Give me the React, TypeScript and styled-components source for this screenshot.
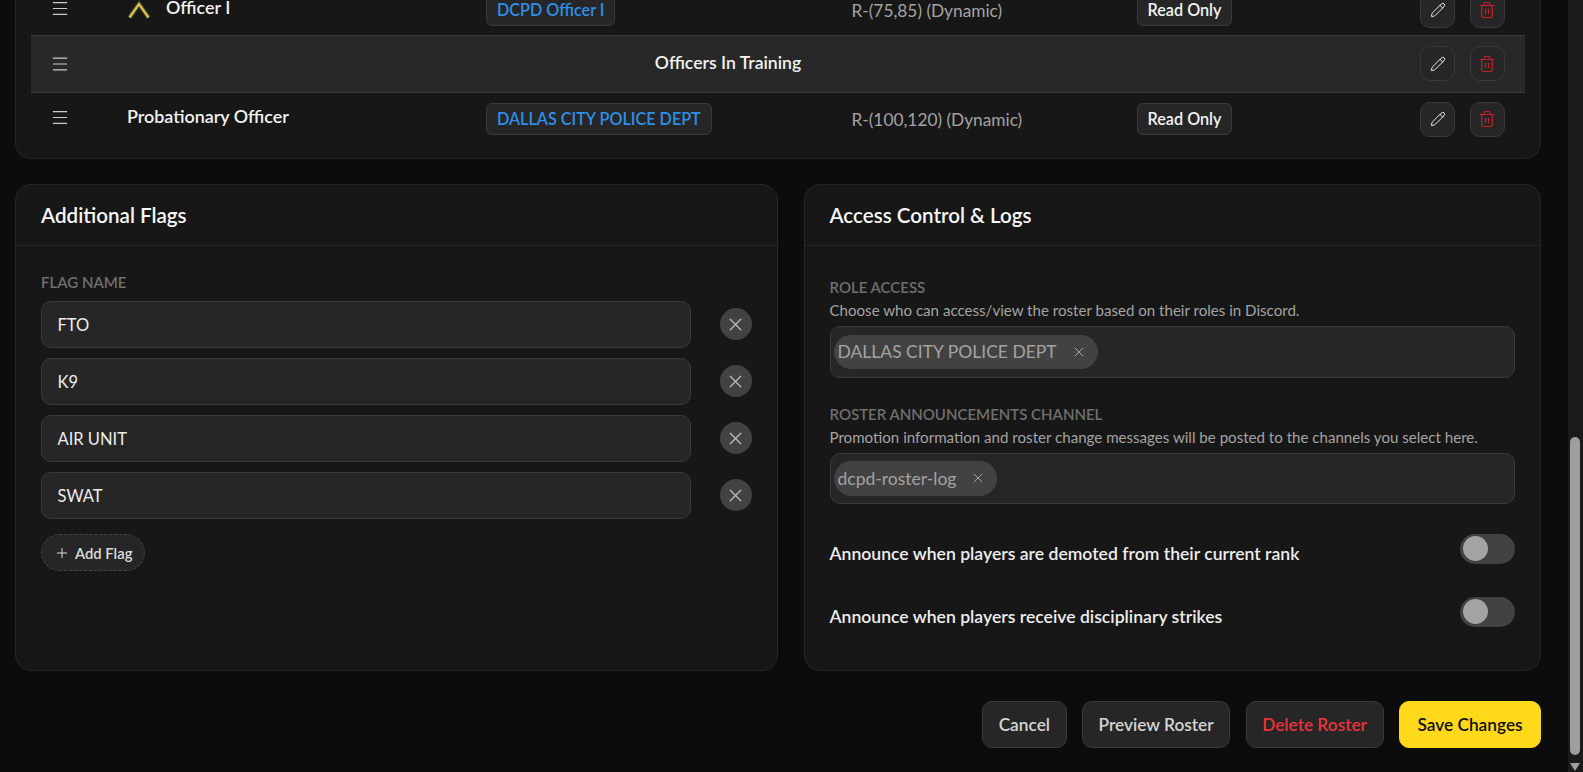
import React from "react";
import styled, { createGlobalStyle } from "styled-components";
import { Menu, Pencil, Plus, Trash2, X } from "lucide-react";

const GlobalStyle = createGlobalStyle`
  html, body {
    margin: 0;
    height: 100%;
    background: #0c0c0c;
    font-family: "Lato", "Noto Sans", sans-serif;
    overflow: hidden;
  }
  * { box-sizing: border-box; }
`;

const Page = styled.div`
  display: flex;
  height: 100vh;
`;

const Main = styled.div`
  flex: 1;
  min-width: 0;
  height: 100%;
  overflow: hidden;
  display: flex;
  flex-direction: column;
  justify-content: flex-end;
  padding: 0 26.5px 24.5px 15px;
`;

const ScrollTrack = styled.div`
  width: 15.5px;
  flex-shrink: 0;
  background: #1a1a1a;
  display: flex;
  flex-direction: column;
  align-items: center;
  padding-top: 436.5px;
`;

const ScrollThumb = styled.div`
  width: 10px;
  height: 318px;
  border-radius: 5px;
  background: #9e9e9e;
`;

const ScrollArrow = styled.div`
  margin-top: 8px;
  width: 0;
  height: 0;
  border-left: 5.5px solid transparent;
  border-right: 5.5px solid transparent;
  border-top: 8px solid #9e9e9e;
`;

const Card = styled.section`
  background: #171717;
  border: 1px solid #262626;
  border-radius: 16px;
`;

const TableCard = styled(Card)`
  flex-shrink: 0;
  padding: 0 15px 14px;
  border-top: 0;
  border-radius: 0 0 16px 16px;
`;

const Row = styled.div<{ $group?: boolean }>`
  display: grid;
  grid-template-columns: 96px 359px 365.5px 285px 192.5px 1fr;
  align-items: center;
  padding: ${(p) => (p.$group ? "10.5px 0" : "9px 0 7px")};
  background: ${(p) => (p.$group ? "#282828" : "transparent")};
  border-top: ${(p) => (p.$group ? "1px solid #3a3a3a" : "0")};
  border-bottom: ${(p) => (p.$group ? "1px solid #3a3a3a" : "0")};
`;

const Handle = styled.div<{ $group?: boolean }>`
  padding-left: 18.5px;
  display: flex;
  color: #c9c9c9;
  transform: translateY(${(p) => (p.$group ? "0" : "-1.5px")});
`;

const RankName = styled.div`
  display: flex;
  align-items: center;
  gap: 15px;
  color: #f2f2f2;
  font-size: 17.9px;
  font-weight: 600;
  transform: translateY(-3px);
`;

const ChevronSvg = styled.svg`
  margin-top: 6px;
  flex-shrink: 0;
`;

const GroupLabel = styled.div`
  grid-column: 2 / 6;
  text-align: center;
  color: #f2f2f2;
  font-size: 17.6px;
  font-weight: 600;
  transform: translateY(-1px);
`;

const Pill = styled.span<{ $blue?: boolean }>`
  display: inline-flex;
  align-items: center;
  height: 32px;
  padding: 0 10px 1px;
  border: 1px solid #3a3a3a;
  border-radius: 6px;
  background: #262626;
  color: ${(p) => (p.$blue ? "#2f8fe6" : "#f2f2f2")};
  font-size: 16.2px;
  font-weight: 600;
  white-space: nowrap;
`;

const RangeText = styled.div`
  color: #a3a3a3;
  font-size: 17.3px;
`;

const Actions = styled.div`
  grid-column: 6;
  display: flex;
  justify-content: flex-end;
  gap: 14.5px;
  padding-right: 20.5px;
`;

const IconButton = styled.button<{ $danger?: boolean }>`
  width: 35px;
  height: 35px;
  padding: 0;
  display: grid;
  place-items: center;
  background: #262626;
  border: 1px solid #3a3a3a;
  border-radius: 10px;
  color: ${(p) => (p.$danger ? "#c42126" : "#ededed")};
`;

const Columns = styled.div`
  flex-shrink: 0;
  margin-top: 25px;
  display: grid;
  grid-template-columns: 762.5px 1fr;
  gap: 26px;
`;

const PanelCard = styled(Card)`
  height: 487px;
`;

const PanelHeader = styled.header`
  height: 61px;
  padding: 0 25px;
  display: flex;
  align-items: center;
  border-bottom: 1px solid #262626;
  color: #f5f5f5;
  font-size: 20.6px;
  font-weight: 600;
`;

const PanelBody = styled.div<{ $top: number }>`
  padding: ${(p) => p.$top}px 25px 0;
`;

const FieldLabel = styled.div`
  color: #6f6f6f;
  font-size: 15px;
  font-weight: 600;
  line-height: 18px;
`;

const FlagList = styled.div`
  margin-top: 10px;
  display: flex;
  flex-direction: column;
  gap: 10px;
`;

const FlagRow = styled.div`
  display: flex;
  align-items: center;
  gap: 28.5px;
`;

const FlagInput = styled.div`
  flex: 1;
  height: 47px;
  padding: 2px 15.5px 0;
  display: flex;
  align-items: center;
  background: #262626;
  border: 1px solid #3a3a3a;
  border-radius: 10px;
  color: #ededed;
  font-size: 16.5px;
`;

const RemoveButton = styled.button`
  width: 32px;
  height: 32px;
  padding: 0;
  flex-shrink: 0;
  display: grid;
  place-items: center;
  border: 0;
  border-radius: 50%;
  background: #424242;
  color: #bdbdbd;
`;

const AddButton = styled.button`
  margin-top: 15.5px;
  height: 37px;
  padding: 1px 12px 0 12px;
  display: flex;
  align-items: center;
  gap: 5px;
  background: #262626;
  border: 1px dashed #444;
  border-radius: 18.5px;
  color: #dcdcdc;
  font-family: inherit;
  font-size: 14.8px;
  font-weight: 600;
`;

const FieldGroup = styled.div<{ $gap?: number }>`
  margin-top: ${(p) => p.$gap ?? 0}px;
`;

const FieldHint = styled.div`
  margin-top: 5px;
  color: #a3a3a3;
  font-size: 15.1px;
  line-height: 18px;
`;

const TagBox = styled.div<{ $tall?: boolean }>`
  margin-top: 7.5px;
  height: ${(p) => (p.$tall ? "51.5px" : "50.5px")};
  padding: 0 3px;
  display: flex;
  align-items: center;
  background: #262626;
  border: 1px solid #3a3a3a;
  border-radius: 10px;
`;

const Chip = styled.span`
  height: 34.5px;
  padding: 0 11px 0 4px;
  display: inline-flex;
  align-items: center;
  gap: 14px;
  background: #424242;
  border-radius: 17.5px;
  color: #a3a3a3;
  font-size: 17.5px;
`;

const ToggleRow = styled.div<{ $gap: number }>`
  margin-top: ${(p) => p.$gap}px;
  display: flex;
  align-items: center;
  justify-content: space-between;
`;

const ToggleLabel = styled.span`
  padding-top: 9px;
  color: #ededed;
  font-size: 17.6px;
  font-weight: 600;
`;

const Toggle = styled.div`
  width: 55px;
  height: 30px;
  padding: 2.5px 3px;
  border-radius: 15px;
  background: #424242;
`;

const Knob = styled.div`
  width: 25px;
  height: 25px;
  border-radius: 50%;
  background: #a3a3a3;
`;

const Footer = styled.div`
  flex-shrink: 0;
  margin-top: 30px;
  display: flex;
  justify-content: flex-end;
  gap: 15.5px;
`;

const FooterButton = styled.button<{ $tone?: "danger" | "primary" }>`
  height: 47px;
  min-width: ${(p) => (p.$tone === "primary" ? "142px" : "0")};
  padding: 0 15.5px;
  border: 1px solid ${(p) => (p.$tone === "primary" ? "#ffd91a" : "#3a3a3a")};
  border-radius: 10px;
  background: ${(p) => (p.$tone === "primary" ? "#ffd91a" : "#262626")};
  color: ${(p) =>
    p.$tone === "primary" ? "#111" : p.$tone === "danger" ? "#e5343a" : "#d4d4d4"};
  font-family: inherit;
  font-size: 17.3px;
  font-weight: 600;
`;

const ChevronIcon = () => (
  <ChevronSvg width="24" height="20" viewBox="0 0 24 20" fill="none">
    <path d="M2.5 17.5 L12 4 L21.5 17.5" stroke="#24402c" strokeWidth="5" />
    <path d="M2.5 17.5 L12 4 L21.5 17.5" stroke="#e9b84f" strokeWidth="2.4" />
  </ChevronSvg>
);

const RowActions = () => (
  <Actions>
    <IconButton>
      <Pencil size={16} strokeWidth={1.5} />
    </IconButton>
    <IconButton $danger>
      <Trash2 size={18} strokeWidth={1.6} />
    </IconButton>
  </Actions>
);

const flags = ["FTO", "K9", "AIR UNIT", "SWAT"];

export default function App() {
  return (
    <Page>
      <GlobalStyle />
      <Main>
        <TableCard>
          <Row>
            <Handle><Menu size={20} strokeWidth={1.4} /></Handle>
            <RankName><ChevronIcon />Officer I</RankName>
            <div><Pill $blue>DCPD Officer I</Pill></div>
            <RangeText>R-(75,85) (Dynamic)</RangeText>
            <div><Pill>Read Only</Pill></div>
            <RowActions />
          </Row>
          <Row $group>
            <Handle $group><Menu size={20} strokeWidth={1.4} /></Handle>
            <GroupLabel>Officers In Training</GroupLabel>
            <RowActions />
          </Row>
          <Row>
            <Handle><Menu size={20} strokeWidth={1.4} /></Handle>
            <RankName>Probationary Officer</RankName>
            <div><Pill $blue>DALLAS CITY POLICE DEPT</Pill></div>
            <RangeText>R-(100,120) (Dynamic)</RangeText>
            <div><Pill>Read Only</Pill></div>
            <RowActions />
          </Row>
        </TableCard>

        <Columns>
          <PanelCard>
            <PanelHeader>Additional Flags</PanelHeader>
            <PanelBody $top={27}>
              <FieldLabel>FLAG NAME</FieldLabel>
              <FlagList>
                {flags.map((flag) => (
                  <FlagRow key={flag}>
                    <FlagInput>{flag}</FlagInput>
                    <RemoveButton><X size={21} strokeWidth={1.5} /></RemoveButton>
                  </FlagRow>
                ))}
              </FlagList>
              <AddButton><Plus size={16} strokeWidth={1.5} />Add Flag</AddButton>
            </PanelBody>
          </PanelCard>

          <PanelCard>
            <PanelHeader>Access Control &amp; Logs</PanelHeader>
            <PanelBody $top={32}>
              <FieldGroup>
                <FieldLabel>ROLE ACCESS</FieldLabel>
                <FieldHint>Choose who can access/view the roster based on their roles in Discord.</FieldHint>
                <TagBox $tall>
                  <Chip>DALLAS CITY POLICE DEPT<X size={16} strokeWidth={1.5} /></Chip>
                </TagBox>
              </FieldGroup>
              <FieldGroup $gap={27}>
                <FieldLabel>ROSTER ANNOUNCEMENTS CHANNEL</FieldLabel>
                <FieldHint>Promotion information and roster change messages will be posted to the channels you select here.</FieldHint>
                <TagBox>
                  <Chip>dcpd-roster-log<X size={16} strokeWidth={1.5} /></Chip>
                </TagBox>
              </FieldGroup>
              <ToggleRow $gap={30}>
                <ToggleLabel>Announce when players are demoted from their current rank</ToggleLabel>
                <Toggle><Knob /></Toggle>
              </ToggleRow>
              <ToggleRow $gap={33}>
                <ToggleLabel>Announce when players receive disciplinary strikes</ToggleLabel>
                <Toggle><Knob /></Toggle>
              </ToggleRow>
            </PanelBody>
          </PanelCard>
        </Columns>

        <Footer>
          <FooterButton>Cancel</FooterButton>
          <FooterButton>Preview Roster</FooterButton>
          <FooterButton $tone="danger">Delete Roster</FooterButton>
          <FooterButton $tone="primary">Save Changes</FooterButton>
        </Footer>
      </Main>
      <ScrollTrack>
        <ScrollThumb />
        <ScrollArrow />
      </ScrollTrack>
    </Page>
  );
}
